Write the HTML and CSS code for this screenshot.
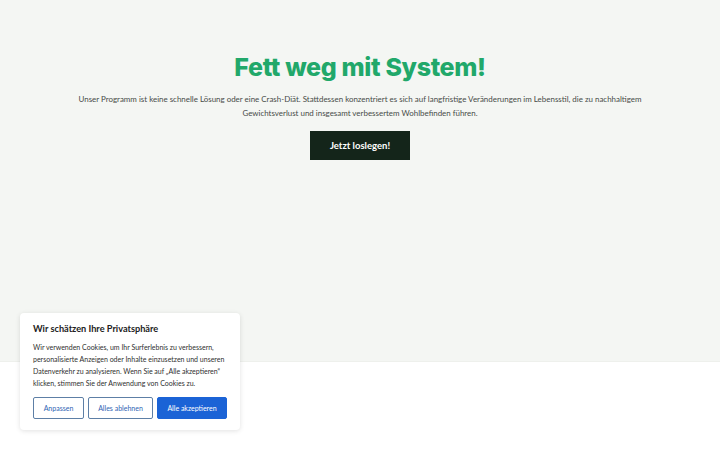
FILE: index.html
```html
<!DOCTYPE html>
<html lang="de">
<head>
<meta charset="utf-8">
<link rel="stylesheet" href="styles.css">
</head>
<body>
<section class="hero">
  <h1 class="title">Fett weg mit System!</h1>
  <p class="lead">Unser Programm ist keine schnelle Lösung oder eine Crash-Diät. Stattdessen konzentriert es sich auf langfristige Veränderungen im Lebensstil, die zu nachhaltigem Gewichtsverlust und insgesamt verbessertem Wohlbefinden führen.</p>
  <a class="cta">Jetzt loslegen!</a>
</section>
<div class="cookie">
  <h2 class="cookie-title">Wir schätzen Ihre Privatsphäre</h2>
  <p class="cookie-text">Wir verwenden Cookies, um Ihr Surferlebnis zu verbessern, personalisierte Anzeigen oder Inhalte einzusetzen und unseren Datenverkehr zu analysieren. Wenn Sie auf „Alle akzeptieren“ klicken, stimmen Sie der Anwendung von Cookies zu.</p>
  <div class="cookie-actions">
    <button class="btn btn-outline btn-a">Anpassen</button>
    <button class="btn btn-outline btn-b">Alles ablehnen</button>
    <button class="btn btn-primary">Alle akzeptieren</button>
  </div>
</div>
</body>
</html>
```
FILE: styles.css
```css
html, body {
  margin: 0;
  padding: 0;
  background: #ffffff;
  font-family: Lato, "Liberation Sans", sans-serif;
}
.hero {
  height: 362px;
  background: #f4f6f3;
  display: flex;
  flex-direction: column;
  align-items: center;
  box-sizing: border-box;
  padding-top: 50px;
  border-bottom: 1px solid #eef0ec;
}
.title {
  margin: 0;
  font-family: Inter, "Noto Sans", sans-serif;
  font-weight: 800;
  font-size: 25px;
  line-height: 34px;
  color: #21a86a;
  letter-spacing: -0.35px;
}
.lead {
  margin: 8px 0 0;
  width: 590px;
  text-align: center;
  font-size: 7.95px;
  line-height: 14px;
  color: #474b48;
}
.cta {
  margin-top: 11px;
  width: 100px;
  height: 29px;
  box-sizing: border-box;
  background: #14251a;
  color: #ffffff;
  font-size: 9.5px;
  font-weight: 700;
  display: flex;
  align-items: center;
  justify-content: center;
}
.cookie {
  position: absolute;
  left: 20px;
  top: 313px;
  width: 220px;
  height: 117px;
  box-sizing: border-box;
  background: #ffffff;
  border-radius: 4px;
  box-shadow: 0 1px 5px rgba(0,0,0,0.12);
  padding: 9px 13px 0 13px;
}
.cookie-title {
  margin: 0;
  font-size: 9.2px;
  font-weight: 700;
  line-height: 14px;
  color: #212121;
}
.cookie-text {
  margin: 5px 0 0;
  font-size: 7px;
  line-height: 12px;
  color: #2f2f2f;
}
.cookie-actions {
  display: flex;
  gap: 4px;
  margin-top: 8px;
}
.btn {
  height: 22px;
  box-sizing: border-box;
  font-family: Lato, "Liberation Sans", sans-serif;
  font-size: 7px;
  border-radius: 2px;
  padding: 0;
  cursor: pointer;
}
.btn-outline {
  background: #ffffff;
  border: 1.5px solid #5d7fa6;
  color: #2f64b4;
}
.btn-a { width: 51px; }
.btn-b { width: 65px; }
.btn-primary {
  width: 70px;
  background: #1b63d6;
  border: 1px solid #1b63d6;
  color: #ffffff;
}
```
